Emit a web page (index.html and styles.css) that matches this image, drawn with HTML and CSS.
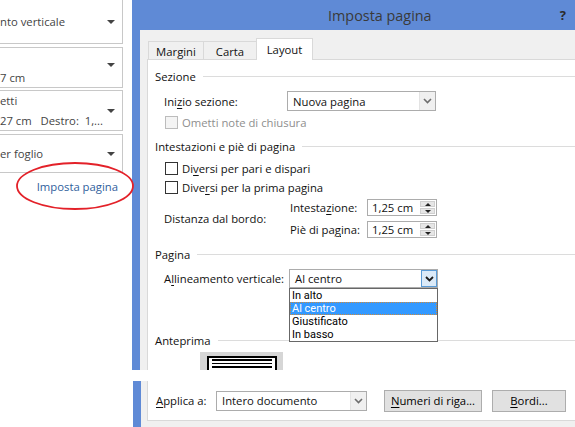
FILE: index.html
```html
<!DOCTYPE html>
<html lang="it">
<head>
<meta charset="utf-8">
<title>Imposta pagina</title>
<link rel="stylesheet" href="styles.css">
</head>
<body>
<div class="screen">
  <div class="top">
    <aside class="ribbon">
      <div class="rb rb1"><span>nto verticale</span><span class="caret"></span></div>
      <div class="rb rb2"><div class="rb-lines"><span>&nbsp;</span><span>7 cm</span></div><span class="caret up2"></span></div>
      <div class="rb rb3"><div class="rb-lines"><span>etti</span><span>27 cm&nbsp;&nbsp;&nbsp;Destro:&nbsp; 1,...</span></div><span class="caret"></span></div>
      <div class="rb rb4"><span>er foglio</span><span class="caret"></span></div>
      <div class="more"><span class="more-link">Imposta pagina</span></div>
    </aside>
    <section class="dialog">
      <header class="titlebar"><span class="title">Imposta pagina</span><span class="help">?</span></header>
      <div class="dlg-body">
        <div class="tabs">
          <div class="tab t-margini">Margini</div>
          <div class="tab t-carta">Carta</div>
          <div class="tab t-layout active">Layout</div>
        </div>
        <div class="panel">
          <div class="group g-sezione">Sezione</div>
          <div class="row r-inizio">
            <span class="lbl w123">Ini<u>z</u>io sezione:</span>
            <div class="select s149">
              <span class="sel-val">Nuova pagina</span>
              <span class="sel-btn"><svg width="9" height="6" viewBox="0 0 9 6"><polyline points="1,1 4.5,4.5 8,1" fill="none" stroke="#6e6e6e" stroke-width="1.6"/></svg></span>
            </div>
          </div>
          <div class="row chk-row r-ometti disabled">
            <span class="chk"></span><span>Ometti note di chiusura</span>
          </div>

          <div class="group g-intest">Intestazioni e piè di pagina</div>
          <div class="row chk-row r-pari"><span class="chk"></span><span>Di<u>v</u>ersi per pari e dispari</span></div>
          <div class="row chk-row r-prima"><span class="chk"></span><span>Dive<u>r</u>si per la prima pagina</span></div>
          <div class="distanza">
            <span class="lbl w126">Distanza dal bordo:</span>
            <div class="dist-col">
              <div class="dist-row">
                <span class="lbl w77">Intesta<u>z</u>ione:</span>
                <div class="spin"><span class="spin-val">1,25 cm</span><span class="spin-btns"><i class="up"></i><i class="down"></i></span></div>
              </div>
              <div class="dist-row">
                <span class="lbl w77">Piè di pa<u>g</u>ina:</span>
                <div class="spin"><span class="spin-val">1,25 cm</span><span class="spin-btns"><i class="up"></i><i class="down"></i></span></div>
              </div>
            </div>
          </div>

          <div class="group g-pagina">Pagina</div>
          <div class="row r-allinea">
            <span class="lbl w125">A<u>l</u>lineamento verticale:</span>
            <div class="combo">
              <div class="select s149 open">
                <span class="sel-val">Al centro</span>
                <span class="sel-btn"><svg width="9" height="6" viewBox="0 0 9 6"><polyline points="1,1 4.5,4.5 8,1" fill="none" stroke="#1c1c1c" stroke-width="1.8"/></svg></span>
              </div>
              <ul class="droplist">
                <li>In alto</li>
                <li class="sel">Al centro</li>
                <li>Giustificato</li>
                <li>In basso</li>
              </ul>
            </div>
          </div>

          <div class="group g-anteprima">Anteprima</div>
          <div class="preview">
            <div class="page"><span class="ln"></span><span class="ln"></span><span class="ln"></span></div>
          </div>
        </div>
      </div>
    </section>
  </div>
  <div class="seam"></div>
  <div class="bottom">
    <div class="bottom-left"></div>
    <div class="dialog-bottom">
      <div class="panel-bottom">
        <span class="lbl w60"><u>A</u>pplica a:</span>
        <div class="select s151">
          <span class="sel-val">Intero documento</span>
          <span class="sel-btn"><svg width="9" height="6" viewBox="0 0 9 6"><polyline points="1,1 4.5,4.5 8,1" fill="none" stroke="#6e6e6e" stroke-width="1.6"/></svg></span>
        </div>
        <button class="btn b-numeri"><u>N</u>umeri di riga...</button>
        <button class="btn b-bordi"><u>B</u>ordi...</button>
      </div>
    </div>
  </div>
  <svg class="annot" width="122" height="50" viewBox="0 0 122 50"><ellipse cx="60" cy="25" rx="58" ry="23" fill="none" stroke="#e32129" stroke-width="1.8"/></svg>
</div>
</body>
</html>
```
FILE: styles.css
```css
* { box-sizing: border-box; margin: 0; padding: 0; }
html, body { width: 575px; height: 427px; overflow: hidden; background: #fff; }
body { font-family: "Open Sans", "Noto Sans", sans-serif; font-size: 11.3px; color: #111; }
u { text-underline-offset: 2px; text-decoration-thickness: 1px; }

.screen { position: relative; width: 575px; height: 427px; }
.top { display: flex; height: 370px; }

/* left ribbon panel */
.ribbon { width: 132px; flex: none; display: flex; flex-direction: column; color: #444; font-size: 11.3px; }
.rb { width: 123px; border: 1px solid #c8c8c8; border-left: none; display: flex; align-items: center; justify-content: space-between; padding-right: 7px; }
.rb1 { height: 44px; border-top: none; }
.rb2 { height: 41px; margin-top: 3px; }
.rb3 { height: 41px; margin-top: 2px; }
.rb4 { height: 39px; margin-top: 3px; }
.rb-lines { display: flex; flex-direction: column; line-height: 20px; }
.caret { width: 0; height: 0; border-left: 4px solid transparent; border-right: 4px solid transparent; border-top: 4px solid #444; }
.caret.up2 { margin-top: -6px; }
.more { width: 123px; margin-top: 6px; text-align: right; padding-right: 5px; line-height: 16px; }
.more-link { color: #2f5e9c; }

/* dialog */
.dialog { flex: 1; min-width: 0; display: flex; flex-direction: column; }
.titlebar { height: 30px; flex: none; background: #5f8ad6; display: flex; align-items: center; padding-left: 196px; padding-right: 9px; color: #3a3a3a; }
.title { font-size: 14.4px; }
.help { margin-left: auto; font-weight: 700; font-size: 13px; color: #2b2b2b; }
.dlg-body { flex: 1; min-height: 0; background: #f0f0f0; border-left: 8px solid #5f8ad6; padding-left: 7px; display: flex; flex-direction: column; }

.tabs { height: 29px; flex: none; display: flex; align-items: flex-end; padding-left: 1px; }
.tab { height: 18px; border: 1px solid #d9d9d9; border-bottom: none; background: #f0f0f0; text-align: center; padding-top: 2px; line-height: 15px; }
.t-margini { width: 56px; }
.t-carta { width: 54px; margin-left: -1px; }
.t-layout { width: 57px; margin-left: -1px; }
.tab.active { height: 22px; background: #fff; margin-bottom: -1px; position: relative; z-index: 2; padding-top: 3px; }

.panel { flex: 1; min-height: 0; background: #fff; border: 1px solid #d9d9d9; border-right: none; border-bottom: none; position: relative; overflow: hidden; }

.group { display: flex; align-items: center; height: 16px; padding-left: 7px; }
.group::after { content: ""; flex: 1; height: 1px; background: #dcdcdc; margin-left: 7px; }
.g-sezione { margin-top: 8px; }
.g-intest { margin-top: 8px; }
.g-pagina { margin-top: 8px; }
.g-anteprima { margin-top: 44px; }

.row { display: flex; align-items: center; padding-left: 16px; }
.lbl { flex: none; }
.w123 { width: 123px; }
.w125 { width: 125px; }
.w126 { width: 126px; }
.w77 { width: 77px; }
.w60 { width: 60px; }

.r-inizio { margin-top: 7px; height: 20px; }
.chk-row { height: 16px; padding-left: 17px; }
.r-ometti { margin-top: 3px; }
.r-pari { margin-top: 6px; }
.r-prima { margin-top: 3px; }
.chk { width: 13px; height: 13px; border: 1px solid #333; background: #fff; margin-right: 4px; flex: none; }
.disabled { color: #8e8e8e; }
.disabled .chk { border-color: #bcbcbc; background: #f4f4f4; }

.select { height: 20px; border: 1px solid #acacac; background: #fff; display: flex; }
.s149 { width: 149px; }
.s151 { width: 151px; }
.sel-val { flex: 1; padding-left: 5px; display: flex; align-items: center; white-space: nowrap; }
.sel-btn { width: 16px; flex: none; background: #f0f0f0; border-left: 1px solid #e3e3e3; display: flex; align-items: center; justify-content: center; }

.distanza { display: flex; align-items: center; padding-left: 16px; margin-top: 4px; }
.dist-col { display: flex; flex-direction: column; gap: 5px; }
.dist-row { display: flex; align-items: center; height: 17px; }
.spin { width: 70px; height: 17px; border: 1px solid #acacac; background: #fff; display: flex; }
.spin-val { flex: 1; padding-left: 4px; display: flex; align-items: center; }
.spin-btns { width: 16px; display: flex; flex-direction: column; gap: 1px; padding: 1px 1px 1px 0; }
.spin-btns i { flex: 1; background: #e6e6e6; border: 1px solid #cfcfcf; display: flex; align-items: center; justify-content: center; }
.spin-btns i::after { content: ""; width: 0; height: 0; border-left: 3px solid transparent; border-right: 3px solid transparent; }
.spin-btns i.up::after { border-bottom: 3px solid #222; }
.spin-btns i.down::after { border-top: 3px solid #222; }

.r-allinea { margin-top: 7px; height: 19px; }
.combo { position: relative; }
.select.open { height: 19px; }
.select.open .sel-btn { background: #dbeaf8; border: 1px solid #5a9bd6; margin: 0; }
.droplist { list-style: none; position: absolute; left: 0; top: 19px; width: 149px; border: 1px solid #676767; background: #fff; z-index: 5; color: #000; font-family: Roboto, "Open Sans", sans-serif; font-size: 11px; }
.droplist li { height: 13px; line-height: 13px; padding-left: 2px; white-space: nowrap; overflow: hidden; }
.droplist li.sel { background: #3399ff; color: #fff; outline: 1px dotted #cf8a3a; outline-offset: -1px; }

.preview { margin: 4px 0 0 52px; width: 83px; height: 40px; background: #d6d6d6; padding: 4px 6px 0 7px; }
.page { height: 40px; background: #fff; border: 2px solid #000; border-bottom: none; display: flex; flex-direction: column; gap: 2px; padding: 1px 3px 0 3px; }
.ln { height: 1.5px; background: #000; }

/* bottom strip */
.seam { height: 11px; background: #fff; }
.bottom { display: flex; height: 46px; }
.bottom-left { width: 133px; flex: none; background: #fff; }
.dialog-bottom { flex: 1; background: #f0f0f0; border-left: 8px solid #5f8ad6; padding-left: 6px; padding-bottom: 6px; }
.panel-bottom { height: 40px; background: #fff; border-left: 1px solid #d9d9d9; border-bottom: 1px solid #d9d9d9; display: flex; align-items: center; padding-left: 8px; }
.btn { font: inherit; color: #000; height: 22px; background: #e1e1e1; border: 1px solid #adadad; display: flex; align-items: center; justify-content: center; }
.b-numeri { width: 98px; margin-left: 17px; }
.b-bordi { width: 74px; margin-left: 10px; }

.annot { position: absolute; left: 15px; top: 161px; pointer-events: none; }
```
